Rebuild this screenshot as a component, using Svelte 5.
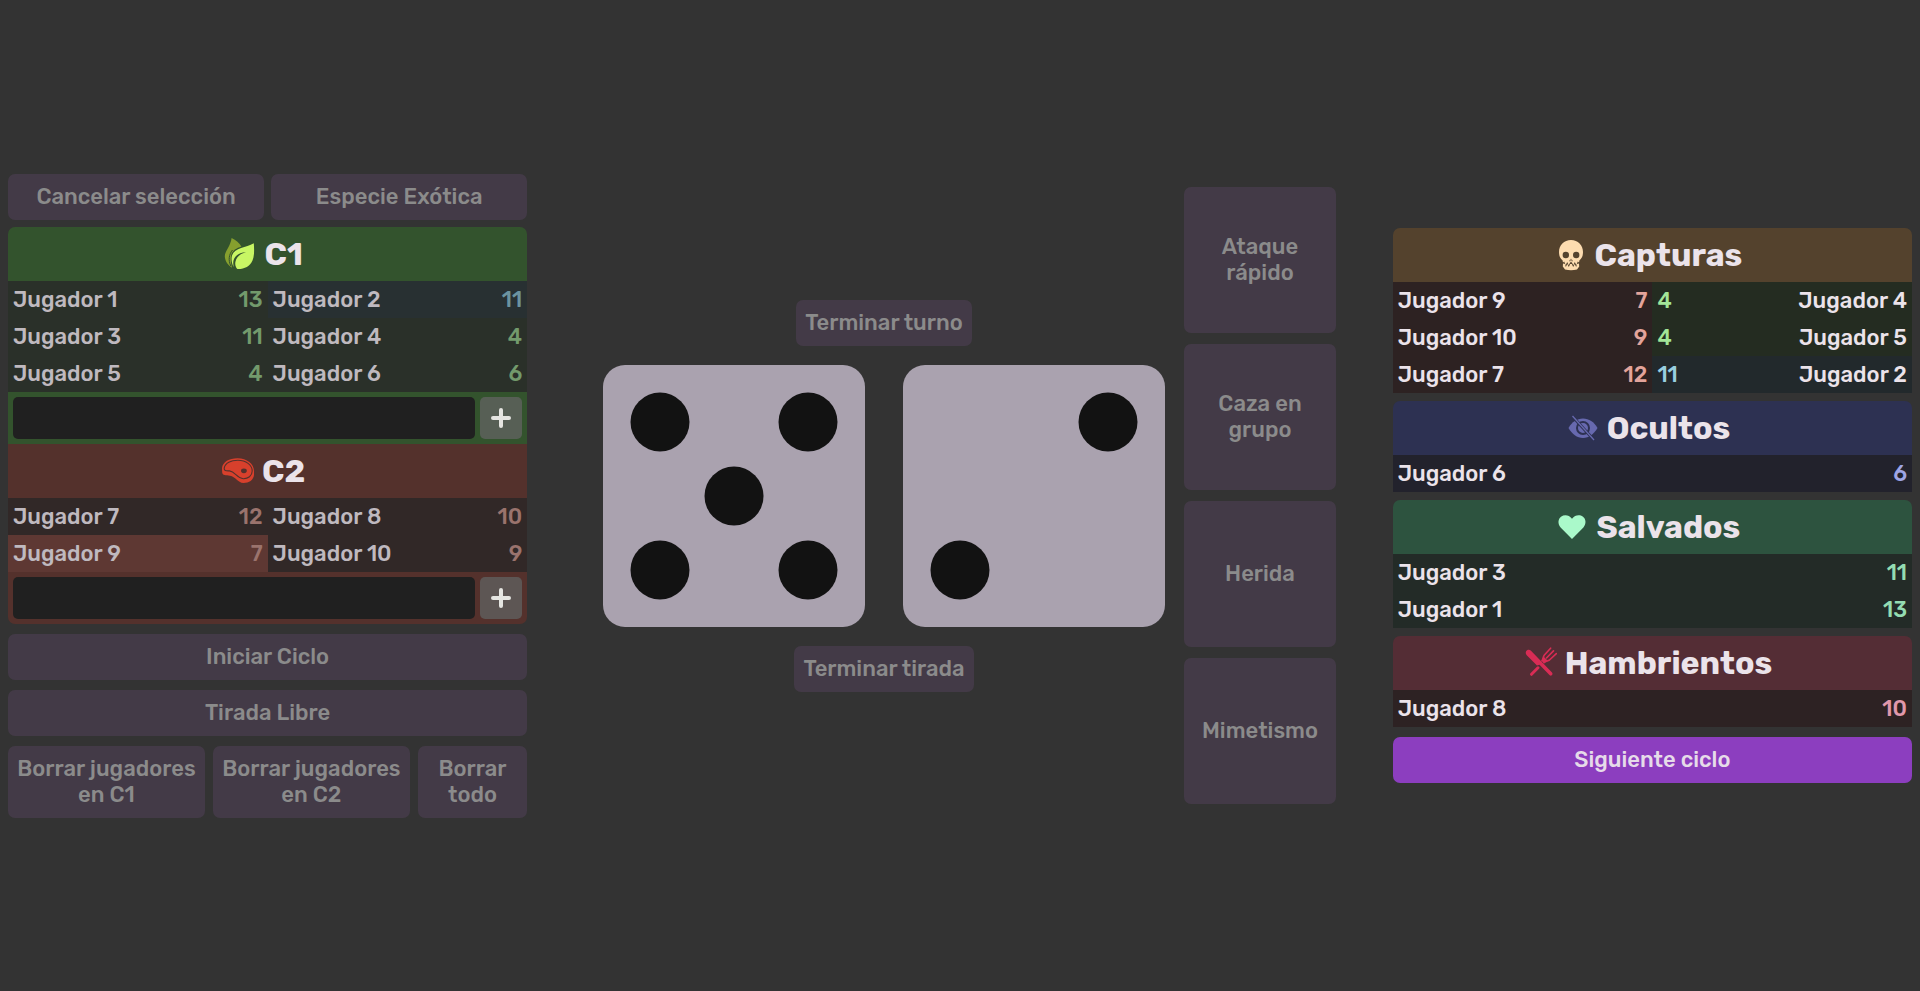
<script>
  const teams = [
    {
      id: 'c1',
      name: 'C1',
      icon: 'leaf',
      rows: [
        [{ name: 'Jugador 1', roll: 13 }, { name: 'Jugador 2', roll: 11, exotic: true }],
        [{ name: 'Jugador 3', roll: 11 }, { name: 'Jugador 4', roll: 4 }],
        [{ name: 'Jugador 5', roll: 4 }, { name: 'Jugador 6', roll: 6 }]
      ]
    },
    {
      id: 'c2',
      name: 'C2',
      icon: 'steak',
      rows: [
        [{ name: 'Jugador 7', roll: 12 }, { name: 'Jugador 8', roll: 10 }],
        [{ name: 'Jugador 9', roll: 7, selected: true }, { name: 'Jugador 10', roll: 9 }]
      ]
    }
  ];

  const captures = [
    { hunter: 'Jugador 9', hunterRoll: 7, prey: 'Jugador 4', preyRoll: 4 },
    { hunter: 'Jugador 10', hunterRoll: 9, prey: 'Jugador 5', preyRoll: 4 },
    { hunter: 'Jugador 7', hunterRoll: 12, prey: 'Jugador 2', preyRoll: 11, exotic: true }
  ];

  const results = [
    { id: 'hidden', title: 'Ocultos', icon: 'eye', players: [{ name: 'Jugador 6', roll: 6 }] },
    {
      id: 'saved',
      title: 'Salvados',
      icon: 'heart',
      players: [{ name: 'Jugador 3', roll: 11 }, { name: 'Jugador 1', roll: 13 }]
    },
    { id: 'hungry', title: 'Hambrientos', icon: 'cutlery', players: [{ name: 'Jugador 8', roll: 10 }] }
  ];

  const dice = [
    [[57, 57], [205, 57], [131, 131], [57, 205], [205, 205]],
    [[205, 57], [57, 205]]
  ];

  const skills = ['Ataque rápido', 'Caza en grupo', 'Herida', 'Mimetismo'];

  let names = $state({ c1: '', c2: '' });
</script>

{#snippet icon(kind)}
  <svg class="icon" viewBox="0 0 32 32" aria-hidden="true">
    {#if kind === 'leaf'}
      <path fill="#869f2e" d="M7.6 0C12 2.200 15.500 5 17.400 8.600C12.500 10.200 8.600 12.500 7.200 17C6.400 20.500 6.700 25 8 29.800C4.500 27.500 1 23.500 .8 18.500C.8 13 6.700 8 7.600 0Z" />
      <path fill="none" stroke="#33532d" stroke-width="1" d="M6.800 28C4 22 5 16.500 8.500 12" />
      <path fill="#c8f664" d="M29.800 5.300C30.300 12 30.400 18 28.500 22.500C26 28.500 20 31.300 13.400 31C11.500 29 10.800 26.500 11.500 23.500C12.500 19 16 15.800 22 14.200C15.500 14.400 10.800 17.600 9.500 22.500C9 25 9.300 27.500 9.800 29.300C7.600 25.500 7 21 8 17.500C11 9.500 22 10 29.800 5.300Z" />
    {:else if kind === 'steak'}
      <path fill="#d8402c" d="M0 13C.8 7 7 3.300 15.500 3.300C25 3.300 32 9 32 16V20C31.500 25 27 28 21.500 28C15.500 27.500 13.500 21.500 8 20.700C4 20.300 .5 20.500 .2 17.500Z" />
      <path fill="none" stroke="#54312c" stroke-width="1.1" d="M2.200 13.200C3 8 9 5.300 15.800 5.300C24 5.300 30.200 10 30.200 16C30.200 21 26 23.800 21.300 23.700C14.500 23.300 13.500 16.500 7.500 15.900C4.500 15.700 2 16 2.200 13.200Z" />
      <ellipse fill="#54312c" cx="21.900" cy="15.800" rx="2.900" ry="2.400" />
    {:else if kind === 'skull'}
      <path fill="#fddcb0" d="M16 1C23 1 28 6 28 13C28 16.500 27 19.500 24.500 21.300L24 23.500L22.800 22.500L21.300 26.200L19.800 23L18.300 26.200L16.800 23.200H15.200L13.700 26.200L12.200 23L10.700 26.200L9.200 22.500L8 23.500L7.500 21.300C5 19.500 4 16.500 4 13C4 6 9 1 16 1Z" />
      <path fill="#fddcb0" d="M8 24.500L10 25L10.800 28L12.300 25L13.800 28L15.200 25H16.800L18.200 28L19.700 25L21.200 28L22 25L24 24.500L24.200 27.500L22 30.500Q16 31.800 10 30.500L7.800 27.500Z" />
      <circle fill="#54422d" cx="10.800" cy="16" r="3.200" />
      <circle fill="#54422d" cx="21.200" cy="16" r="3.200" />
      <path fill="#54422d" d="M15.500 19.500L14.200 22.200H15.500ZM16.500 19.500L17.800 22.200H16.500Z" />
    {:else if kind === 'eye'}
      <path fill="#6769af" d="M1.500 16C5 10 10 6.500 16 6.500S27 10 30.500 16C27 22 22 26 16 26S5 22 1.500 16Z" />
      <circle fill="none" stroke="#2d3152" stroke-width="2" cx="16" cy="16" r="6" />
      <path stroke="#2d3152" stroke-width="3" d="M6 5L27 28" />
      <path stroke="#6769af" stroke-width="1.300" d="M5.500 4L27 28" />
    {:else if kind === 'heart'}
      <path fill="#aaf9ca" d="M16 28L4.600 16.500C1.500 13 2 8 5 5.800C8.500 3.300 13 4 16 7.800C19 4 23.500 3.300 27 5.800C30 8 30.500 13 27.400 16.500Z" />
    {:else}
      <path fill="#d92c55" d="M1 4.500C2 2.500 4.500 2.300 6 3.800L27 25.500C28.500 27.200 26.500 29.700 24.700 28.200L14.500 17.700L12 18.500L2.500 9C1 7.500 .3 6 1 4.500Z" />
      <path fill="none" stroke="#d92c55" stroke-width="3" stroke-linecap="round" d="M6.500 27.300L13 20.800" />
      <path fill="none" stroke="#d92c55" stroke-width="1.600" stroke-linecap="round" d="M25.600 1.200L19.200 8.200C18 10 18.200 12 17 13.800M31.300 6.600L24.500 13C22.800 14.200 20.800 14 19 15.600M28.500 3.900L21.500 11" />
      <path fill="#d92c55" d="M18.500 9.500L23 14L18.800 16L16.600 13.800Z" />
    {/if}
  </svg>
{/snippet}

<main>
  <section class="side">
    <div class="pair">
      <button disabled>Cancelar selección</button>
      <button disabled>Especie Exótica</button>
    </div>

    <div class="teams">
      {#each teams as team}
        <div class="team {team.id}">
          <h2>{@render icon(team.icon)}{team.name}</h2>
          <table>
            <tbody>
              {#each team.rows as row}
                <tr>
                  {#each row as p}
                    <td class="name" class:exotic={p.exotic} class:selected={p.selected}>{p.name}</td>
                    <td class="roll" class:exotic={p.exotic} class:selected={p.selected}>{p.roll}</td>
                  {/each}
                </tr>
              {/each}
            </tbody>
          </table>
          <form class="add" onsubmit={(e) => e.preventDefault()}>
            <input type="text" aria-label="Nombre del jugador en {team.name}" bind:value={names[team.id]} />
            <button class="plus" aria-label="Añadir a {team.name}">
              <svg viewBox="0 0 20 20" aria-hidden="true">
                <path d="M10 2V18M2 10H18" />
              </svg>
            </button>
          </form>
        </div>
      {/each}
    </div>

    <div class="actions">
      <button disabled>Iniciar Ciclo</button>
      <button disabled>Tirada Libre</button>
      <div class="clear">
        <button disabled>Borrar jugadores en C1</button>
        <button disabled>Borrar jugadores en C2</button>
        <button disabled>Borrar todo</button>
      </div>
    </div>
  </section>

  <section class="board">
    <div class="table-top">
      <button disabled>Terminar turno</button>
      <div class="dice">
        {#each dice as pips}
          <svg viewBox="0 0 262 262" role="img" aria-label={String(pips.length)}>
            <rect width="262" height="262" rx="22" fill="#aaa2af" />
            {#each pips as [x, y]}
              <circle cx={x} cy={y} r="29.500" fill="#121212" />
            {/each}
          </svg>
        {/each}
      </div>
      <button disabled>Terminar tirada</button>
    </div>
    <div class="skills">
      {#each skills as skill}
        <button disabled>{skill}</button>
      {/each}
    </div>
  </section>

  <section class="side summary">
    <div class="result captures">
      <h2>{@render icon('skull')}Capturas</h2>
      <table>
        <tbody>
          {#each captures as c}
            <tr>
              <td class="name hunter">{c.hunter}</td>
              <td class="roll hunter">{c.hunterRoll}</td>
              <td class="roll prey" class:exotic={c.exotic}>{c.preyRoll}</td>
              <td class="name prey" class:exotic={c.exotic}>{c.prey}</td>
            </tr>
          {/each}
        </tbody>
      </table>
    </div>
    {#each results as r}
      <div class="result {r.id}">
        <h2>{@render icon(r.icon)}{r.title}</h2>
        <table>
          <tbody>
            {#each r.players as p}
              <tr>
                <td class="name">{p.name}</td>
                <td class="roll">{p.roll}</td>
              </tr>
            {/each}
          </tbody>
        </table>
      </div>
    {/each}
    <button class="next">Siguiente ciclo</button>
  </section>
</main>

<style>
  :global(body) {
    margin: 0;
    background: #333;
  }

  main {
    box-sizing: border-box;
    min-height: 100vh;
    padding: 8px;
    display: flex;
    align-items: center;
    justify-content: space-between;
    gap: 16px;
    font-family: Rubik, Inter, sans-serif;
    font-size: 22px;
    font-weight: 500;
    line-height: 26px;
    color: #ebe3ea;
  }

  .side {
    flex: none;
    width: 27.27%;
  }

  button {
    font: inherit;
    border: 0;
    border-radius: 7px;
    padding: 10px 9px;
    color: #e6dbe9;
    background: #8c3ebf;
  }

  button:disabled {
    color: #8b8b8b;
    background: #433a47;
  }

  h2 {
    margin: 0;
    height: 54px;
    padding-right: 8px;
    display: flex;
    align-items: center;
    justify-content: center;
    gap: 8px;
    font-size: 32px;
    font-weight: 700;
    line-height: 38px;
  }

  .icon {
    width: 32px;
    height: 32px;
  }

  table {
    width: 100%;
    table-layout: fixed;
    border-collapse: collapse;
  }

  td {
    box-sizing: border-box;
    height: 37px;
    padding: 2px 5px 0;
  }

  td.roll {
    width: 12%;
    text-align: right;
  }

  .pair {
    display: grid;
    grid-template-columns: 1fr 1fr;
    gap: 7px;
    margin-bottom: 7px;
  }

  .teams {
    border-radius: 7px;
    overflow: hidden;
  }

  .team .name {
    color: #bfb9bf;
  }

  .c1 {
    background: #33532d;
  }

  .c1 td {
    background: #2a3029;
  }

  .c1 .roll {
    color: #739a6c;
  }

  .c1 td.exotic {
    background: #283032;
  }

  .c1 .roll.exotic {
    color: #6c93a0;
  }

  .c2 {
    background: #54312c;
  }

  .c2 td {
    background: #312827;
  }

  .c2 .roll {
    color: #9a736d;
  }

  .c2 td.selected {
    background: #5e3833;
  }

  .add {
    display: flex;
    gap: 5px;
    padding: 5px;
  }

  .add input {
    flex: 1;
    min-width: 0;
    box-sizing: border-box;
    height: 42px;
    padding: 0 8px;
    border: 0;
    border-radius: 5px;
    font: inherit;
    color: inherit;
    background: #202020;
  }

  .plus {
    width: 42px;
    height: 42px;
    padding: 0;
    border-radius: 5px;
    display: grid;
    place-items: center;
    background: #575f55;
  }

  .c2 .plus {
    background: #5d5654;
  }

  .plus svg {
    width: 20px;
    height: 20px;
    fill: none;
    stroke: #e5e5e1;
    stroke-width: 4;
    stroke-linecap: round;
  }

  .actions {
    display: flex;
    flex-direction: column;
    gap: 10px;
    margin-top: 10px;
  }

  .clear {
    display: grid;
    grid-template-columns: 9fr 9fr 5fr;
    gap: 8px;
  }

  .board {
    display: flex;
    align-items: center;
    justify-content: center;
    min-width: 0;
  }

  .table-top {
    display: flex;
    flex-direction: column;
    align-items: center;
    min-width: 0;
  }

  .dice {
    display: flex;
    gap: 38px;
    padding: 19px;
  }

  .dice svg {
    width: 262px;
    min-width: 0;
    flex: 0 1 auto;
  }

  .skills {
    flex: none;
    display: flex;
    flex-direction: column;
    gap: 11px;
  }

  .skills button {
    width: 152px;
    height: 146px;
  }

  .summary {
    padding-top: 19px;
  }

  .result {
    margin-bottom: 8px;
  }

  .result h2 {
    border-radius: 7px 7px 0 0;
  }

  .captures h2 {
    background: #54422d;
  }

  .captures .hunter {
    background: #2d2222;
  }

  .captures .prey {
    background: #242c21;
  }

  .captures .name.prey {
    text-align: right;
  }

  .captures .roll.hunter {
    color: #e3a49b;
  }

  .captures .roll.prey {
    text-align: left;
    color: #a3e598;
  }

  .captures .prey.exotic {
    background: #22292c;
  }

  .captures .roll.prey.exotic {
    color: #98cfe0;
  }

  .hidden h2 {
    background: #2d3152;
  }

  .hidden td {
    background: #22222c;
  }

  .hidden .roll {
    color: #9ea5e5;
  }

  .saved h2 {
    background: #2d533f;
  }

  .saved td {
    background: #232b27;
  }

  .saved .roll {
    color: #94dcb2;
  }

  .hungry h2 {
    background: #542d35;
  }

  .hungry td {
    background: #2d2223;
  }

  .hungry .roll {
    color: #e098ab;
  }

  .next {
    display: block;
    width: 100%;
    margin-top: 10px;
  }
</style>
